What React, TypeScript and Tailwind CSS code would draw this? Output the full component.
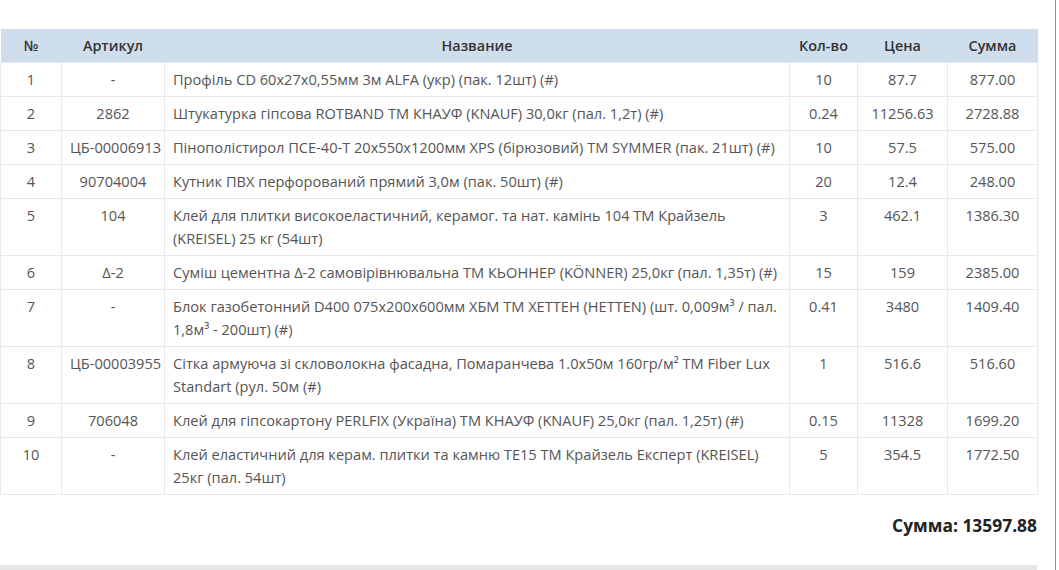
const rows = [
  ['1', '-', 'Профіль CD 60x27x0,55мм 3м ALFA (укр) (пак. 12шт) (#)', '10', '87.7', '877.00'],
  ['2', '2862', 'Штукатурка гіпсова ROTBAND ТМ КНАУФ (KNAUF) 30,0кг (пал. 1,2т) (#)', '0.24', '11256.63', '2728.88'],
  ['3', 'ЦБ-00006913', 'Пінополістирол ПСЕ-40-Т 20х550х1200мм XPS (бірюзовий) ТМ SYMMER (пак. 21шт) (#)', '10', '57.5', '575.00'],
  ['4', '90704004', 'Кутник ПВХ перфорований прямий 3,0м (пак. 50шт) (#)', '20', '12.4', '248.00'],
  ['5', '104', 'Клей для плитки високоеластичний, керамог. та нат. камінь 104 ТМ Крайзель (KREISEL) 25 кг (54шт)', '3', '462.1', '1386.30'],
  ['6', 'Δ-2', 'Суміш цементна Δ-2 самовірівнювальна ТМ КЬОННЕР (KÖNNER) 25,0кг (пал. 1,35т) (#)', '15', '159', '2385.00'],
  ['7', '-', 'Блок газобетонний D400 075х200х600мм ХБМ ТМ ХЕТТЕН (HETTEN) (шт. 0,009м³ / пал. 1,8м³ - 200шт) (#)', '0.41', '3480', '1409.40'],
  ['8', 'ЦБ-00003955', 'Сітка армуюча зі скловолокна фасадна, Помаранчева 1.0x50м 160гр/м² ТМ Fiber Lux Standart (рул. 50м (#)', '1', '516.6', '516.60'],
  ['9', '706048', 'Клей для гіпсокартону PERLFIX (Україна) ТМ КНАУФ (KNAUF) 25,0кг (пал. 1,25т) (#)', '0.15', '11328', '1699.20'],
  ['10', '-', 'Клей еластичний для керам. плитки та камню ТЕ15 ТМ Крайзель Експерт (KREISEL) 25кг (пал. 54шт)', '5', '354.5', '1772.50'],
]

const heads = ['№', 'Артикул', 'Название', 'Кол-во', 'Цена', 'Сумма']

export default function App() {
  return (
    <div className="flex h-[570px] overflow-hidden bg-white" style={{ fontFamily: '"Open Sans", "Noto Sans", sans-serif' }}>
      <div className="flex w-[1037px] shrink-0 flex-col pt-[29px]">
        <table className="w-full table-fixed border-collapse text-[14.6px] leading-[23px] text-[#555]">
          <colgroup>
            <col className="w-[61px]" />
            <col className="w-[103px]" />
            <col className="w-[625px]" />
            <col className="w-[68px]" />
            <col className="w-[90px]" />
            <col className="w-[90px]" />
          </colgroup>
          <thead>
            <tr className="bg-[#cfdeec]">
              {heads.map(h => (
                <th key={h} className="px-2 py-[5px] text-center text-[14.4px] font-semibold text-[#333]">
                  {h}
                </th>
              ))}
            </tr>
          </thead>
          <tbody>
            {rows.map(r => (
              <tr key={r[0]}>
                {r.map((c, i) => (
                  <td
                    key={i}
                    className={
                      'border border-[#e9e9e9] px-2 py-[5px] align-top ' + (i === 2 ? 'text-left' : 'text-center')
                    }
                  >
                    {c}
                  </td>
                ))}
              </tr>
            ))}
          </tbody>
        </table>
        <div className="mt-[18px] text-right text-[17.4px] font-bold leading-[24px] text-[#222]">Сумма: 13597.88</div>
        <div className="flex-1" />
        <div className="h-[5px] bg-[#e6e6e6]" />
      </div>
      <div className="w-[18px] shrink-0" />
      <div className="w-px shrink-0 bg-[#5cb85c]" />
    </div>
  )
}
